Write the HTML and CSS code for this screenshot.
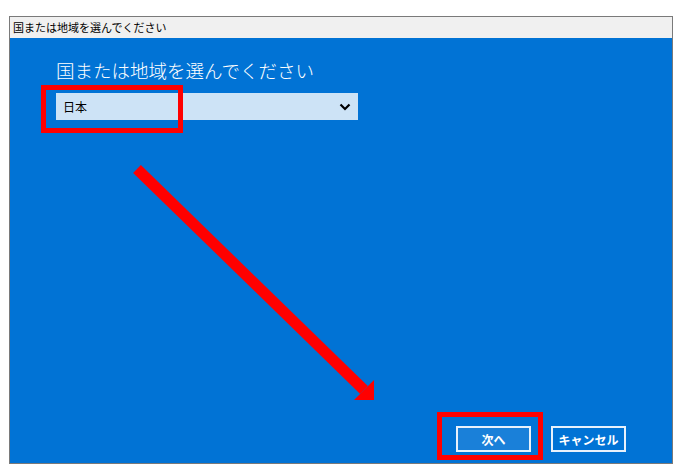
FILE: index.html
```html
<!DOCTYPE html>
<html lang="ja">
<head>
    <meta charset="UTF-8">
    <meta name="viewport" content="width=device-width, initial-scale=1.0">
    <title>国または地域を選んでください</title>
    <link rel="stylesheet" href="styles.css">
</head>
<body>

<div class="window">
    <div class="title-bar">国または地域を選んでください</div>
    <div class="content">
        <h1 class="heading">国または地域を選んでください</h1>
        <div class="select">
            <span>日本</span>
            <svg class="chevron" width="12" height="8" viewBox="0 0 12 8">
                <path d="M1.5 1.5 L6 6 L10.5 1.5" fill="none" stroke="#000" stroke-width="2.2"/>
            </svg>
        </div>
        <div class="buttons">
            <button class="btn btn-primary">次へ</button>
            <button class="btn">キャンセル</button>
        </div>
    </div>
</div>

<!-- annotations drawn over the screenshot -->
<div class="mark mark-select"></div>
<div class="mark mark-next"></div>
<svg class="arrow" width="681" height="472" viewBox="0 0 681 472">
    <line x1="137" y1="169" x2="364" y2="390" stroke="#ff0000" stroke-width="11"/>
    <polygon points="374,380 374,400 354,400" fill="#ff0000"/>
</svg>

</body>
</html>
```

FILE: styles.css
```css
body {
    margin: 0;
    background-color: white;
    font-family: "Noto Sans CJK JP", "Noto Sans", sans-serif;
    position: relative;
    width: 681px;
    height: 472px;
    overflow: hidden;
}
.window {
    margin: 16px 0 0 9px;
    width: 662px;
    border: 1px solid #7a7a7a;
    display: flex;
    flex-direction: column;
}
.title-bar {
    height: 21px;
    background-color: #f0f0f0;
    font-size: 11px;
    line-height: 21px;
    padding-left: 3px;
    color: #000;
}
.content {
    height: 425px;
    box-sizing: border-box;
    background-color: #0173d5;
    padding: 19px 46px 11px 46px;
    display: flex;
    flex-direction: column;
}
.heading {
    margin: 0;
    font-size: 18.5px;
    font-weight: 300;
    line-height: 26px;
    color: white;
}
.select {
    margin-top: 10px;
    width: 302px;
    height: 27px;
    box-sizing: border-box;
    background-color: #cde3f6;
    display: flex;
    align-items: center;
    justify-content: space-between;
    padding: 0 7px;
    font-size: 12px;
    color: #000;
}
.chevron {
    display: block;
}
.buttons {
    margin-top: auto;
    display: flex;
    justify-content: flex-end;
    gap: 20px;
}
.btn {
    width: 75px;
    height: 26px;
    border: 2px solid #e8f1fb;
    background-color: transparent;
    color: white;
    font-family: inherit;
    font-size: 12px;
    font-weight: bold;
    padding: 0;
}
.btn-primary {
    background-color: #1a80d9;
}
.mark {
    position: absolute;
    border: 5px solid #ff0000;
    box-sizing: border-box;
}
.mark-select {
    left: 41px;
    top: 85px;
    width: 142px;
    height: 48px;
}
.mark-next {
    left: 437px;
    top: 412px;
    width: 106px;
    height: 48px;
}
.arrow {
    position: absolute;
    left: 0;
    top: 0;
}
```
